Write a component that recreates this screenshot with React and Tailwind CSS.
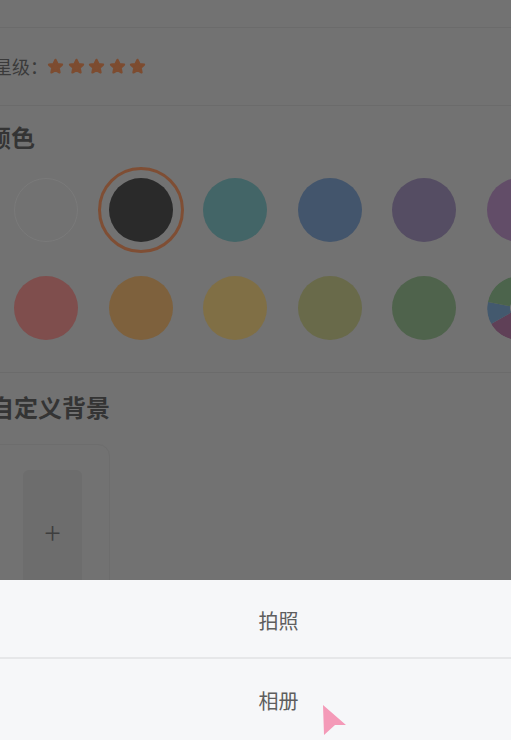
const topColors = [
  { bg: 'bg-[#727272]', extra: 'border border-[#7a7a7a]' },
  { bg: 'bg-[#2a2a2a]', extra: 'outline-[3px] outline-offset-[8px] outline-[#7f4e34] outline' },
  { bg: 'bg-[#436567]', extra: '' },
  { bg: 'bg-[#43556c]', extra: '' },
  { bg: 'bg-[#554d63]', extra: '' },
  { bg: 'bg-[#624d68]', extra: '' },
];

const bottomColors = ['bg-[#7f4e4d]', 'bg-[#7e613d]', 'bg-[#806f45]', 'bg-[#696a4a]', 'bg-[#4f634c]'];

const Star = () => (
  <svg width="17" height="17" viewBox="0 0 24 24">
    <path
      d="M12 2.5l2.9 6 6.4.9-4.7 4.5 1.2 6.5L12 17.3l-5.8 3.1 1.2-6.5-4.7-4.5 6.4-.9z"
      fill="#7d4c30"
      stroke="#7d4c30"
      strokeWidth="3"
      strokeLinejoin="round"
    />
  </svg>
);

const Wheel = () => (
  <svg width="64" height="64" viewBox="0 0 64 64">
    <path d="M32 32 L32 0 A32 32 0 0 1 62 21 Z" fill="#807244" />
    <path d="M32 32 L62 21 A32 32 0 0 1 58 50 Z" fill="#62596a" />
    <path d="M32 32 L58 50 A32 32 0 0 1 32 64 Z" fill="#553f55" />
    <path d="M32 32 L32 64 A32 32 0 0 1 4 48 Z" fill="#5f4057" />
    <path d="M32 32 L4 48 A32 32 0 0 1 1 26 Z" fill="#43596e" />
    <path d="M32 32 L1 26 A32 32 0 0 1 32 0 Z" fill="#4c644c" />
    <circle cx="32" cy="32" r="9" fill="#7a7a7a" />
  </svg>
);

export default function App() {
  return (
    <div
      className="relative h-[740px] w-[511px] overflow-hidden bg-[#727272]"
      style={{ fontFamily: '"Noto Sans CJK SC", "Noto Sans", sans-serif' }}
    >
      <div className="h-[28px] border-b border-[#6b6b6b]" />

      <div className="flex h-[78px] items-center border-b border-[#6b6b6b]">
        <span className="-ml-[6px] text-[18px] text-[#3a3a3a]">星级：</span>
        <div className="-ml-[1px] flex gap-[3.5px]">
          <Star />
          <Star />
          <Star />
          <Star />
          <Star />
        </div>
      </div>

      <div className="border-b border-[#6b6b6b] pb-[32px] pt-[15px]">
        <h2 className="-ml-[13px] text-[24px] font-bold leading-[32px] text-[#343434]">颜色</h2>
        <div className="mt-[25px] flex gap-[30.6px] pl-[14px]">
          {topColors.map((c, i) => (
            <div key={i} className={`h-[64px] w-[64px] shrink-0 rounded-full ${c.bg} ${c.extra}`} />
          ))}
        </div>
        <div className="mt-[34px] flex gap-[30.6px] pl-[14px]">
          {bottomColors.map((c, i) => (
            <div key={i} className={`h-[64px] w-[64px] shrink-0 rounded-full ${c}`} />
          ))}
          <div className="h-[64px] w-[64px] shrink-0 overflow-hidden rounded-full">
            <Wheel />
          </div>
        </div>
      </div>

      <div className="pt-[18px]">
        <h2 className="-ml-[10px] text-[24px] font-bold leading-[32px] text-[#343434]">自定义背景</h2>
        <div className="-ml-[20px] mt-[21px] h-[180px] w-[130px] rounded-tr-[12px] border border-[#6d6d6d] pl-[42px] pt-[25px]">
          <div className="flex h-[150px] w-[59px] items-center justify-center rounded-[6px] bg-[#6d6d6d] pb-[28px]">
            <span className="text-[30px] font-extralight leading-none text-[#3e3e3e]">+</span>
          </div>
        </div>
      </div>

      <div className="absolute inset-x-0 bottom-0 h-[160px] bg-[#f6f7f9]">
        <div className="flex h-[79px] items-center justify-center border-b-2 border-[#e6e7e9] pl-[46px] pt-[4px] text-[20px] text-[#5e5e5e]">
          拍照
        </div>
        <div className="flex h-[79px] items-center justify-center pl-[46px] pt-[4px] text-[20px] text-[#5e5e5e]">相册</div>
        <svg className="absolute left-[320px] top-[124px]" width="28" height="34" viewBox="0 0 28 34">
          <path d="M3 1 L26 21 L15 21 L4 31 Z" fill="#f49ab8" />
        </svg>
      </div>
    </div>
  );
}
